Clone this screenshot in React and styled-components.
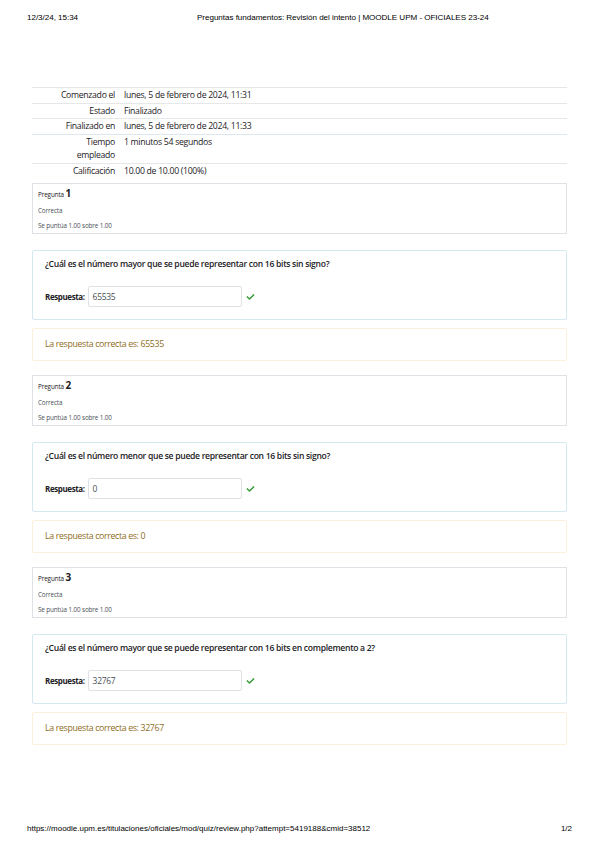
import React from 'react'
import styled, { createGlobalStyle } from 'styled-components'

const GlobalStyle = createGlobalStyle`
  html, body {
    margin: 0;
    padding: 0;
    background: #fff;
  }
  body {
    font-family: "Open Sans", "Noto Sans", sans-serif;
    color: #1d2125;
  }
`

const summary = [
  { label: 'Comenzado el', value: 'lunes, 5 de febrero de 2024, 11:31' },
  { label: 'Estado', value: 'Finalizado' },
  { label: 'Finalizado en', value: 'lunes, 5 de febrero de 2024, 11:33' },
  { label: 'Tiempo empleado', value: '1 minutos 54 segundos' },
  { label: 'Calificación', value: '10.00 de 10.00 (100%)' },
]

const questions = [
  {
    num: 1,
    text: '¿Cuál es el número mayor que se puede representar con 16 bits sin signo?',
    answer: '65535',
  },
  {
    num: 2,
    text: '¿Cuál es el número menor que se puede representar con 16 bits sin signo?',
    answer: '0',
  },
  {
    num: 3,
    text: '¿Cuál es el número mayor que se puede representar con 16 bits en complemento a 2?',
    answer: '32767',
  },
]

function Check() {
  return (
    <svg width="9" height="8" viewBox="0 0 512 512">
      <path
        fill="#3c9a3c"
        d="M173.9 439.4l-166.4-166.4c-10-10-10-26.2 0-36.2l36.2-36.2c10-10 26.2-10 36.2 0L192 312.7 432.1 72.6c10-10 26.2-10 36.2 0l36.2 36.2c10 10 10 26.2 0 36.2L210.1 439.4c-10 10-26.2 10-36.2 0z"
      />
    </svg>
  )
}

function Question({ q }) {
  return (
    <QBlock>
      <InfoBox>
        <QNo>
          Pregunta <b>{q.num}</b>
        </QNo>
        <InfoLine>Correcta</InfoLine>
        <InfoLine>Se puntúa 1.00 sobre 1.00</InfoLine>
      </InfoBox>
      <Formulation>
        <QText>{q.text}</QText>
        <AnswerRow>
          <AnswerLabel>Respuesta:</AnswerLabel>
          <AnswerInput>{q.answer}</AnswerInput>
          <Check />
        </AnswerRow>
      </Formulation>
      <Feedback>La respuesta correcta es: {q.answer}</Feedback>
    </QBlock>
  )
}

export default function App() {
  return (
    <Page>
      <GlobalStyle />
      <PrintHeader>
        <span>12/3/24, 15:34</span>
        <span>Preguntas fundamentos: Revisión del intento | MOODLE UPM - OFICIALES 23-24</span>
      </PrintHeader>
      <Main>
        <Summary>
          <tbody>
            {summary.map((r) => (
              <tr key={r.label}>
                <th>{r.label}</th>
                <td>{r.value}</td>
              </tr>
            ))}
          </tbody>
        </Summary>
        {questions.map((q) => (
          <Question key={q.num} q={q} />
        ))}
      </Main>
      <PrintFooter>
        <span>https://moodle.upm.es/titulaciones/oficiales/mod/quiz/review.php?attempt=5419188&amp;cmid=38512</span>
        <span>1/2</span>
      </PrintFooter>
    </Page>
  )
}

const Page = styled.div`
  min-height: 848px;
  display: flex;
  flex-direction: column;
`

const PrintHeader = styled.header`
  display: grid;
  grid-template-columns: 170px auto;
  padding: 13px 27px 0;
  font-family: "Liberation Sans", Arial, sans-serif;
  font-size: 8.1px;
  letter-spacing: -0.05px;
  color: #000;
  line-height: 10px;
`

const Main = styled.main`
  padding: 64px 32px 0;
`

const Summary = styled.table`
  width: 100%;
  border-collapse: collapse;
  font-size: 8.7px;
  letter-spacing: -0.3px;
  color: #1d2125;
  margin-bottom: 5px;

  tr {
    border-top: 1px solid #e6e7e8;
  }

  tr:nth-child(4) {
    border-top-color: #dde8ee;
  }

  th {
    width: 60px;
    padding: 1px 5px 0 23px;
    text-align: right;
    font-weight: 400;
    line-height: 13.5px;
    vertical-align: top;
  }

  td {
    padding: 1px 4px 0;
    line-height: 13.5px;
    vertical-align: top;
  }
`

const QBlock = styled.section`
  margin-bottom: 14px;
`

const InfoBox = styled.div`
  border: 1px solid #dee2e6;
  padding: 4px 5px 3px;
  width: 100%;
  box-sizing: border-box;
  font-size: 6.3px;
  letter-spacing: -0.1px;
  color: #495057;
`

const QNo = styled.div`
  font-size: 6.3px;
  color: #1d2125;
  line-height: 10px;

  b {
    font-size: 10px;
    font-weight: 700;
  }
`

const InfoLine = styled.div`
  line-height: 8px;
  margin-top: 7px;
`

const Formulation = styled.div`
  margin-top: 16px;
  border: 1px solid #d3e9ef;
  border-radius: 2px;
  padding: 7px 12px 12px;
`

const QText = styled.div`
  font-size: 8.6px;
  letter-spacing: -0.3px;
  font-weight: 600;
  line-height: 13px;
`

const AnswerRow = styled.div`
  display: flex;
  align-items: center;
  margin-top: 15px;
  gap: 3px;
`

const AnswerLabel = styled.span`
  font-size: 8px;
  font-weight: 700;
  letter-spacing: -0.4px;
`

const AnswerInput = styled.div`
  width: 144px;
  height: 19px;
  border: 1px solid #dee2e6;
  border-radius: 2px;
  padding: 0 4px;
  display: flex;
  align-items: center;
  font-size: 8.5px;
  letter-spacing: -0.3px;
  color: #495057;
  margin-right: 1px;
`

const Feedback = styled.div`
  margin-top: 8px;
  border: 1px solid #fcefdc;
  border-radius: 2px;
  padding: 9px 12px;
  font-size: 8.8px;
  letter-spacing: -0.35px;
  line-height: 13px;
  color: #8f6d1d;
`

const PrintFooter = styled.footer`
  margin-top: auto;
  display: flex;
  justify-content: space-between;
  padding: 0 27px 14px;
  font-family: "Liberation Sans", Arial, sans-serif;
  font-size: 8px;
  letter-spacing: 0;
  color: #000;
  line-height: 10px;
`
